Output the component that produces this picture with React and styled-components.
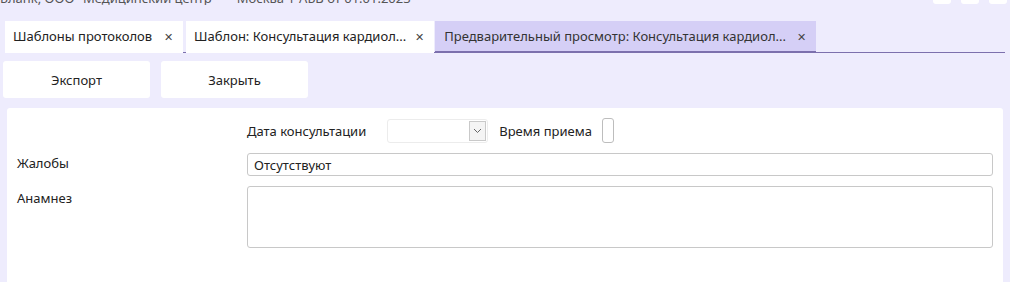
import styled, { createGlobalStyle } from "styled-components";

const GlobalStyle = createGlobalStyle`
  html, body {
    margin: 0;
    padding: 0;
    background: #eeecfd;
    overflow: hidden;
  }
  body {
    font-family: "Segoe UI", "Noto Sans", "Open Sans", sans-serif;
    font-size: 13px;
    color: #222;
  }
`;

const Page = styled.div`
  width: 1010px;
  height: 282px;
  overflow: hidden;
  background: #eeecfd;
`;

const TitleBar = styled.div`
  display: flex;
  justify-content: space-between;
  height: 5px;
  overflow: hidden;
`;

const Title = styled.div`
  margin-top: -11px;
  font-size: 13px;
  color: #555;
  white-space: nowrap;
`;

const WinButtons = styled.div`
  display: flex;
  gap: 10px;
  padding-right: 3px;
  margin-top: -14px;
`;

const WinButton = styled.div`
  width: 18px;
  height: 18px;
  background: #fff;
  border-radius: 3px;
`;

const TabBar = styled.div`
  display: flex;
  margin: 16px 5px 0 5px;
  border-bottom: 1px solid #7c70ad;
  height: 31px;
`;

const Tab = styled.div`
  display: flex;
  align-items: center;
  gap: ${(p) => p.$closeGap || 12}px;
  padding: 0 10px 0 ${(p) => p.$pl || 8}px;
  margin-right: ${(p) => p.$gap || 0}px;
  background: ${(p) => (p.$active ? "#d5cff6" : "#fff")};
  border-bottom: 2px solid ${(p) => (p.$active ? "#7c70ad" : "transparent")};
  margin-bottom: -1px;
  color: ${(p) => (p.$active ? "#333" : "#222")};
  white-space: nowrap;
`;

const Close = styled.span`
  font-size: 11px;
  color: #444;
`;

const Toolbar = styled.div`
  display: flex;
  gap: 11px;
  padding: 8px 3px 0 3px;
`;

const ToolButton = styled.button`
  width: 147px;
  height: 37px;
  background: #fff;
  border: none;
  border-radius: 3px;
  font: inherit;
  color: #222;
`;

const Panel = styled.div`
  margin: 10px 7px 0 7px;
  background: #fff;
  border-radius: 3px;
  height: 200px;
  padding: 10px 10px 0 10px;
  display: grid;
  grid-template-columns: 230px 1fr;
  grid-auto-rows: min-content;
  align-content: start;
  row-gap: 10px;
  align-items: start;
`;

const Label = styled.div`
  padding-top: ${(p) => p.$pt || 3}px;
  color: #222;
`;

const InlineRow = styled.div`
  display: flex;
  align-items: center;
  gap: 18px;
  height: 25px;
`;

const Select = styled.div`
  width: 99px;
  height: 22px;
  margin-left: 3px;
  border: 1px solid #ececec;
  border-radius: 3px;
  display: flex;
  justify-content: flex-end;
  align-items: stretch;
`;

const Arrow = styled.div`
  width: 15px;
  margin: 1px;
  border: 1px solid #c9c9c9;
  background: #f4f4f4;
  display: flex;
  align-items: center;
  justify-content: center;
`;

const TimeLabel = styled.span`
  margin-left: -7px;
`;

const TimeInput = styled.div`
  width: 10px;
  height: 23px;
  border: 1px solid #bdbdbd;
  border-radius: 3px;
  margin-left: -8px;
`;

const Input = styled.div`
  width: 732px;
  height: ${(p) => p.$h || 21}px;
  border: 1px solid #c8c8c8;
  border-radius: 3px;
  padding: 0 6px;
  display: flex;
  align-items: ${(p) => (p.$multi ? "flex-start" : "center")};
`;

export default function App() {
  return (
    <Page>
      <GlobalStyle />
      <TitleBar>
        <Title>Бланк, ООО "Медицинский центр" — Москва 1-АБВ от 01.01.2023</Title>
        <WinButtons>
          <WinButton />
          <WinButton />
          <WinButton />
        </WinButtons>
      </TitleBar>
      <TabBar>
        <Tab $gap={3}>
          Шаблоны протоколов <Close>✕</Close>
        </Tab>
        <Tab $gap={1} $closeGap={9}>
          Шаблон: Консультация кардиол... <Close>✕</Close>
        </Tab>
        <Tab $active $pl={9} $closeGap={11}>
          Предварительный просмотр: Консультация кардиол... <Close>✕</Close>
        </Tab>
      </TabBar>
      <Toolbar>
        <ToolButton>Экспорт</ToolButton>
        <ToolButton>Закрыть</ToolButton>
      </Toolbar>
      <Panel>
        <div />
        <InlineRow>
          <span>Дата консультации</span>
          <Select>
            <Arrow>
              <svg width="9" height="6" viewBox="0 0 9 6">
                <path d="M1 1 L4.5 4.5 L8 1" fill="none" stroke="#666" strokeWidth="1" />
              </svg>
            </Arrow>
          </Select>
          <TimeLabel>Время приема</TimeLabel>
          <TimeInput />
        </InlineRow>
        <Label $pt={1}>Жалобы</Label>
        <Input>Отсутствуют</Input>
        <Label $pt={0}>Анамнез</Label>
        <Input $h={60} $multi />
      </Panel>
    </Page>
  );
}
